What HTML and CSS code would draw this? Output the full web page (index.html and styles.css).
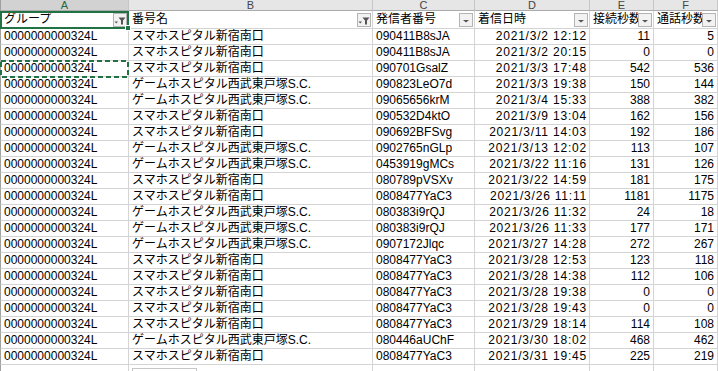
FILE: index.html
```html
<!DOCTYPE html>
<html lang="ja">
<head>
<meta charset="utf-8">
<title>Sheet</title>
<link rel="stylesheet" href="styles.css">
</head>
<body>
<div class="sheet">
  <div class="row hdr">
    <div class="ch sel">A</div><div class="ch">B</div><div class="ch">C</div><div class="ch">D</div><div class="ch">E</div><div class="ch">F</div>
  </div>
  <div class="row r1">
    <div class="cell"><span class="t">グループ</span><span class="fb"><svg width="12" height="12" viewBox="0 0 12 12"><polygon points="0.5,7.5 4,7.5 2.25,9.5" fill="#555"/><polygon points="4.5,3.5 11.5,3.5 9,6.5 9,10.5 7,10.5 7,6.5" fill="#555"/></svg></span></div>
    <div class="cell"><span class="t">番号名</span><span class="fb"><svg width="12" height="12" viewBox="0 0 12 12"><polygon points="0.5,7.5 4,7.5 2.25,9.5" fill="#555"/><polygon points="4.5,3.5 11.5,3.5 9,6.5 9,10.5 7,10.5 7,6.5" fill="#555"/></svg></span></div>
    <div class="cell"><span class="t">発信者番号</span><span class="fb"><svg width="12" height="12" viewBox="0 0 12 12"><polygon points="3,6 9,6 6,8.5" fill="#555"/></svg></span></div>
    <div class="cell"><span class="t">着信日時</span><span class="fb"><svg width="12" height="12" viewBox="0 0 12 12"><polygon points="3,6 9,6 6,8.5" fill="#555"/></svg></span></div>
    <div class="cell"><span class="t">接続秒数</span><span class="fb"><svg width="12" height="12" viewBox="0 0 12 12"><polygon points="3,6 9,6 6,8.5" fill="#555"/></svg></span></div>
    <div class="cell"><span class="t">通話秒数</span><span class="fb"><svg width="12" height="12" viewBox="0 0 12 12"><polygon points="3,6 9,6 6,8.5" fill="#555"/></svg></span></div>
  </div>
  <div class="row"><div class="cell">0000000000324L</div><div class="cell">スマホスピタル新宿南口</div><div class="cell">090411B8sJA</div><div class="cell date">2021/3/2 12:12</div><div class="cell num">11</div><div class="cell num">5</div></div>
  <div class="row"><div class="cell">0000000000324L</div><div class="cell">スマホスピタル新宿南口</div><div class="cell">090411B8sJA</div><div class="cell date">2021/3/2 20:15</div><div class="cell num">0</div><div class="cell num">0</div></div>
  <div class="row"><div class="cell">0000000000324L</div><div class="cell">スマホスピタル新宿南口</div><div class="cell">090701GsalZ</div><div class="cell date">2021/3/3 17:48</div><div class="cell num">542</div><div class="cell num">536</div></div>
  <div class="row"><div class="cell">0000000000324L</div><div class="cell">ゲームホスピタル西武東戸塚S.C.</div><div class="cell">090823LeO7d</div><div class="cell date">2021/3/3 19:38</div><div class="cell num">150</div><div class="cell num">144</div></div>
  <div class="row"><div class="cell">0000000000324L</div><div class="cell">ゲームホスピタル西武東戸塚S.C.</div><div class="cell">09065656krM</div><div class="cell date">2021/3/4 15:33</div><div class="cell num">388</div><div class="cell num">382</div></div>
  <div class="row"><div class="cell">0000000000324L</div><div class="cell">スマホスピタル新宿南口</div><div class="cell">090532D4ktO</div><div class="cell date">2021/3/9 13:04</div><div class="cell num">162</div><div class="cell num">156</div></div>
  <div class="row"><div class="cell">0000000000324L</div><div class="cell">スマホスピタル新宿南口</div><div class="cell">090692BFSvg</div><div class="cell date">2021/3/11 14:03</div><div class="cell num">192</div><div class="cell num">186</div></div>
  <div class="row"><div class="cell">0000000000324L</div><div class="cell">ゲームホスピタル西武東戸塚S.C.</div><div class="cell">0902765nGLp</div><div class="cell date">2021/3/13 12:02</div><div class="cell num">113</div><div class="cell num">107</div></div>
  <div class="row"><div class="cell">0000000000324L</div><div class="cell">ゲームホスピタル西武東戸塚S.C.</div><div class="cell">0453919gMCs</div><div class="cell date">2021/3/22 11:16</div><div class="cell num">131</div><div class="cell num">126</div></div>
  <div class="row"><div class="cell">0000000000324L</div><div class="cell">スマホスピタル新宿南口</div><div class="cell">080789pVSXv</div><div class="cell date">2021/3/22 14:59</div><div class="cell num">181</div><div class="cell num">175</div></div>
  <div class="row"><div class="cell">0000000000324L</div><div class="cell">スマホスピタル新宿南口</div><div class="cell">0808477YaC3</div><div class="cell date">2021/3/26 11:11</div><div class="cell num">1181</div><div class="cell num">1175</div></div>
  <div class="row"><div class="cell">0000000000324L</div><div class="cell">ゲームホスピタル西武東戸塚S.C.</div><div class="cell">080383i9rQJ</div><div class="cell date">2021/3/26 11:32</div><div class="cell num">24</div><div class="cell num">18</div></div>
  <div class="row"><div class="cell">0000000000324L</div><div class="cell">ゲームホスピタル西武東戸塚S.C.</div><div class="cell">080383i9rQJ</div><div class="cell date">2021/3/26 11:33</div><div class="cell num">177</div><div class="cell num">171</div></div>
  <div class="row"><div class="cell">0000000000324L</div><div class="cell">ゲームホスピタル西武東戸塚S.C.</div><div class="cell">0907172Jlqc</div><div class="cell date">2021/3/27 14:28</div><div class="cell num">272</div><div class="cell num">267</div></div>
  <div class="row"><div class="cell">0000000000324L</div><div class="cell">スマホスピタル新宿南口</div><div class="cell">0808477YaC3</div><div class="cell date">2021/3/28 12:53</div><div class="cell num">123</div><div class="cell num">118</div></div>
  <div class="row"><div class="cell">0000000000324L</div><div class="cell">スマホスピタル新宿南口</div><div class="cell">0808477YaC3</div><div class="cell date">2021/3/28 14:38</div><div class="cell num">112</div><div class="cell num">106</div></div>
  <div class="row"><div class="cell">0000000000324L</div><div class="cell">スマホスピタル新宿南口</div><div class="cell">0808477YaC3</div><div class="cell date">2021/3/28 19:38</div><div class="cell num">0</div><div class="cell num">0</div></div>
  <div class="row"><div class="cell">0000000000324L</div><div class="cell">スマホスピタル新宿南口</div><div class="cell">0808477YaC3</div><div class="cell date">2021/3/28 19:43</div><div class="cell num">0</div><div class="cell num">0</div></div>
  <div class="row"><div class="cell">0000000000324L</div><div class="cell">スマホスピタル新宿南口</div><div class="cell">0808477YaC3</div><div class="cell date">2021/3/29 18:14</div><div class="cell num">114</div><div class="cell num">108</div></div>
  <div class="row"><div class="cell">0000000000324L</div><div class="cell">ゲームホスピタル西武東戸塚S.C.</div><div class="cell">080446aUChF</div><div class="cell date">2021/3/30 18:02</div><div class="cell num">468</div><div class="cell num">462</div></div>
  <div class="row"><div class="cell">0000000000324L</div><div class="cell">スマホスピタル新宿南口</div><div class="cell">0808477YaC3</div><div class="cell date">2021/3/31 19:45</div><div class="cell num">225</div><div class="cell num">219</div></div>
  <div class="row"><div class="cell"></div><div class="cell"></div><div class="cell"></div><div class="cell"></div><div class="cell"></div><div class="cell"></div></div>

  <div class="selbox"></div>
  <div class="handle"></div>
  <svg class="marquee" width="129" height="18" viewBox="0 0 129 18"><rect x="1" y="1" width="127" height="16" fill="none" stroke="#217346" stroke-width="2" stroke-dasharray="5 3"/></svg>
  <div class="paste"></div>
</div>
</body>
</html>
```
FILE: styles.css
```css
html, body {
  margin: 0;
  padding: 0;
  background: #fff;
}
body {
  font-family: "Liberation Sans", "Noto Sans CJK JP", sans-serif;
  font-size: 12px;
  color: #000;
  overflow: hidden;
}
.sheet {
  position: relative;
  width: 718px;
  height: 371px;
  overflow: hidden;
}
.row {
  display: grid;
  grid-template-columns: 129px 244px 102px 115px 64px 64px;
}
.ch {
  height: 11px;
  box-sizing: border-box;
  background: #e6e6e6;
  border-right: 1px solid #c6c6c6;
  border-bottom: 1px solid #ababab;
  font-size: 11px;
  line-height: 10px;
  text-align: center;
  color: #444;
  overflow: hidden;
}
.ch.sel {
  background: #d2d2d2;
  color: #1e6b40;
  border-left: 1px solid #a0a0a0;
}
.cell {
  height: 16px;
  box-sizing: border-box;
  border-right: 1px solid #d4d4d4;
  border-bottom: 1px solid #d4d4d4;
  line-height: 15px;
  padding: 0 3px;
  white-space: nowrap;
  overflow: hidden;
}
.row .cell:first-child {
  border-left: 1px solid #a0a0a0;
}
.r1 .cell {
  height: 18px;
  line-height: 17px;
  display: flex;
  align-items: center;
  padding: 0 1px 0 3px;
}
.r1 .t {
  flex: 1;
  min-width: 0;
  overflow: hidden;
  white-space: nowrap;
}
.fb {
  flex: none;
  width: 14px;
  height: 14px;
  box-sizing: border-box;
  border: 1px solid #b4b4b4;
  background: #f2f2f2;
  display: flex;
  align-items: center;
  justify-content: center;
}
.fb svg {
  display: block;
}
.num {
  text-align: right;
  padding-right: 3px;
}
.date {
  text-align: right;
  padding-right: 2px;
  letter-spacing: 0.8px;
}
.selbox {
  position: absolute;
  left: 0;
  top: 11px;
  width: 129px;
  height: 18px;
  box-sizing: border-box;
  border: 2px solid #217346;
}
.handle {
  position: absolute;
  left: 125px;
  top: 25px;
  width: 6px;
  height: 6px;
  box-sizing: border-box;
  background: #217346;
  border: 1px solid #fff;
}
.marquee {
  position: absolute;
  left: 0;
  top: 60px;
}
.paste {
  position: absolute;
  left: 132px;
  top: 368px;
  width: 65px;
  height: 12px;
  box-sizing: border-box;
  border: 1px solid #c6c6c6;
  background: #fff;
}
```
